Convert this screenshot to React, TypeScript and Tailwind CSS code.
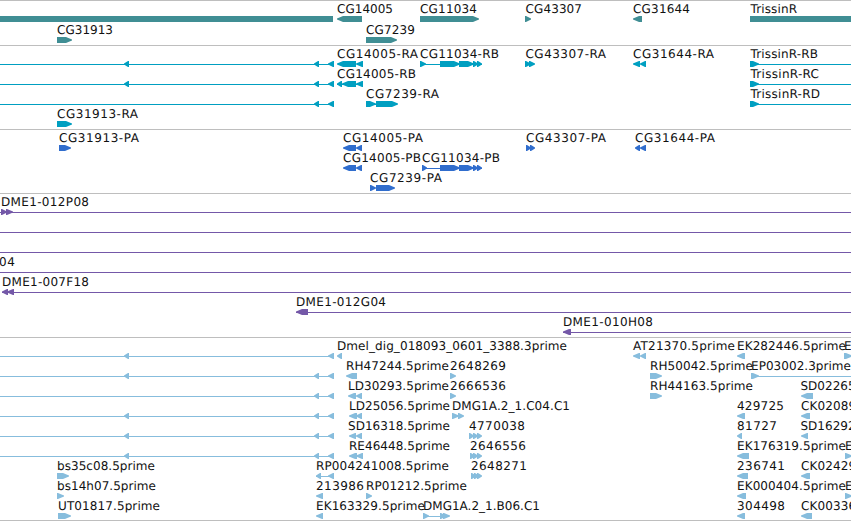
type Label = [x: number, text: string, end: number];
// a negative direction points left, zero is a plain bar
type Glyph = [from: number, to: number, dir: -1 | 0 | 1];
type Span = [from: number, to: number];

interface Row {
  labels?: Label[];
  lines?: Span[];
  glyphs?: Glyph[];
}

interface TrackData {
  name: string;
  color: string;
  height: string;
  pitch: number;
  rows: Row[];
}

const W = 851;

const tracks: TrackData[] = [
  {
    name: 'genes',
    color: 'fill-[#408e94]',
    height: 'h-[45px]',
    pitch: 21,
    rows: [
      {
        labels: [
          [337, 'CG14005', 393],
          [420, 'CG11034', 477],
          [525.5, 'CG43307', 582],
          [633, 'CG31644', 690],
          [750.5, 'TrissinR', 797],
        ],
        glyphs: [
          [0, 333, 0],
          [337, 362, -1],
          [420, 479, 1],
          [525, 531, 1],
          [633, 642, -1],
          [750, W, 0],
        ],
      },
      {
        labels: [
          [57, 'CG31913', 113],
          [366, 'CG7239', 415],
        ],
        glyphs: [
          [57, 72, 1],
          [366, 397, 1],
        ],
      },
    ],
  },
  {
    name: 'transcripts',
    color: 'fill-[#009fc1]',
    height: 'h-[84px]',
    pitch: 20,
    rows: [
      {
        labels: [
          [337, 'CG14005-RA', 418],
          [420, 'CG11034-RB', 499],
          [525.5, 'CG43307-RA', 606],
          [633, 'CG31644-RA', 714],
          [750.5, 'TrissinR-RB', 818],
        ],
        lines: [[0, 333], [420, 482], [750, W]],
        glyphs: [
          [124, 129, -1], [314, 319, -1], [328, 334, -1],
          [337, 356, -1], [356, 363, -1],
          [420, 426, 1], [440, 460, 1], [459, 474, 1], [473, 478, 1], [477, 482, 1],
          [525, 531, 1], [529, 535, 1],
          [633, 640, -1], [640, 646, -1],
          [750, 759, 1],
        ],
      },
      {
        labels: [
          [337, 'CG14005-RB', 416],
          [750.5, 'TrissinR-RC', 819],
        ],
        lines: [[0, 333], [337, 362], [750, W]],
        glyphs: [
          [124, 129, -1], [314, 319, -1], [328, 334, -1],
          [337, 342, -1], [342, 356, -1], [356, 363, -1],
          [750, 759, 1],
        ],
      },
      {
        labels: [
          [366, 'CG7239-RA', 439],
          [750.5, 'TrissinR-RD', 820],
        ],
        lines: [[0, 333], [366, 397], [750, W]],
        glyphs: [
          [314, 319, -1], [328, 334, -1],
          [366, 376, 1], [376, 398, 1],
          [750, 759, 1],
        ],
      },
      { labels: [[57, 'CG31913-RA', 138]], glyphs: [[57, 72, 1]] },
    ],
  },
  {
    name: 'proteins',
    color: 'fill-[#306dcd]',
    height: 'h-[64px]',
    pitch: 20,
    rows: [
      {
        labels: [
          [59, 'CG31913-PA', 139],
          [343, 'CG14005-PA', 423],
          [526, 'CG43307-PA', 606],
          [635, 'CG31644-PA', 715],
        ],
        glyphs: [
          [59, 71, 1],
          [343, 356, -1], [356, 362, -1],
          [526, 531, 1], [530, 535, 1],
          [635, 640, -1], [640, 646, -1],
        ],
      },
      {
        labels: [
          [343, 'CG14005-PB', 421],
          [422, 'CG11034-PB', 500],
        ],
        lines: [[422, 482]],
        glyphs: [
          [343, 356, -1], [356, 362, -1],
          [422, 427, 1], [440, 460, 1], [459, 474, 1], [473, 478, 1], [477, 482, 1],
        ],
      },
      {
        labels: [[370, 'CG7239-PA', 442]],
        glyphs: [[370, 376, 1], [376, 395, 1]],
      },
    ],
  },
  {
    name: 'clones',
    color: 'fill-[#7458a8]',
    height: 'h-[144px]',
    pitch: 20,
    rows: [
      {
        labels: [[1, 'DME1-012P08', 89]],
        lines: [[0, W]],
        glyphs: [[1, 7, 1], [6, 13, 1]],
      },
      { lines: [[0, W]] },
      { lines: [[0, W]] },
      { labels: [[-1, '04', 15]], lines: [[0, W]] },
      {
        labels: [[2, 'DME1-007F18', 89]],
        lines: [[2, W]],
        glyphs: [[2, 8, -1], [7, 14, -1]],
      },
      {
        labels: [[296, 'DME1-012G04', 386]],
        lines: [[296, W]],
        glyphs: [[296, 308, -1]],
      },
      {
        labels: [[563, 'DME1-010H08', 653]],
        lines: [[563, W]],
        glyphs: [[563, 571, -1]],
      },
    ],
  },
  {
    name: 'ests',
    color: 'fill-[#87bddd]',
    height: 'h-[183px]',
    pitch: 20,
    rows: [
      {
        labels: [
          [337, 'Dmel_dig_018093_0601_3388.3prime', 567],
          [633, 'AT21370.5prime', 735],
          [737, 'EK282446.5prime', 846],
          [844, 'E', 852],
        ],
        lines: [[0, 333]],
        glyphs: [
          [124, 129, -1], [328, 334, -1], [337, 342, -1],
          [633, 640, -1], [640, 646, -1], [737, 745, -1], [844, 852, 1],
        ],
      },
      {
        labels: [
          [346, 'RH47244.5prime', 449],
          [450, '2648269', 506],
          [650, 'RH50042.5prime', 753],
          [751, 'EP03002.3prime', 851],
        ],
        lines: [[0, 333], [751, W]],
        glyphs: [
          [124, 129, -1], [314, 319, -1], [328, 334, -1],
          [346, 357, -1], [450, 456, 1], [650, 662, 1], [751, 759, 1],
        ],
      },
      {
        labels: [
          [348, 'LD30293.5prime', 449],
          [450, '2666536', 506],
          [650, 'RH44163.5prime', 753],
          [800.5, 'SD02265.5prime', 902],
        ],
        lines: [[0, 333]],
        glyphs: [
          [314, 319, -1], [328, 334, -1], [348, 356, -1], [356, 362, -1],
          [450, 456, 1], [650, 662, 1], [801, 813, -1],
        ],
      },
      {
        labels: [
          [349, 'LD25056.5prime', 450],
          [452, 'DMG1A.2_1.C04.C1', 570],
          [737, '429725', 784],
          [801, 'CK020895.5prime', 911],
        ],
        lines: [[0, 333], [452, 462]],
        glyphs: [
          [124, 129, -1], [314, 319, -1], [328, 334, -1],
          [349, 357, -1], [356, 362, -1],
          [452, 459, 1], [458, 464, 1], [737, 745, -1], [801, 810, -1],
        ],
      },
      {
        labels: [
          [348, 'SD16318.5prime', 450],
          [469, '4770038', 525],
          [737, '81727', 777],
          [800.5, 'SD16292.5prime', 902],
        ],
        lines: [[0, 333]],
        glyphs: [
          [124, 129, -1], [314, 319, -1], [328, 334, -1],
          [349, 356, -1], [356, 362, -1],
          [469, 474, 1], [473, 478, 1], [477, 482, 1],
          [737, 742, -1], [801, 808, -1],
        ],
      },
      {
        labels: [
          [349, 'RE46448.5prime', 450],
          [470, '2646556', 526],
          [737, 'EK176319.5prime', 846],
          [845, 'E', 853],
        ],
        lines: [[0, 333]],
        glyphs: [
          [124, 129, -1], [314, 319, -1], [328, 334, -1],
          [349, 357, -1], [356, 363, -1],
          [470, 475, 1], [473, 478, 1], [477, 482, 1],
          [737, 749, -1], [845, 852, 1],
        ],
      },
      {
        labels: [
          [57, 'bs35c08.5prime', 155],
          [316, 'RP004241008.5prime', 449],
          [471, '2648271', 527],
          [737, '236741', 785],
          [801, 'CK024292.5prime', 911],
        ],
        lines: [[316, 333]],
        glyphs: [
          [57, 69, 1], [316, 321, -1], [328, 334, -1],
          [471, 476, 1], [474, 479, 1], [477, 482, 1],
          [737, 748, -1], [801, 810, -1],
        ],
      },
      {
        labels: [
          [57, 'bs14h07.5prime', 156],
          [316, '213986', 364],
          [366, 'RP01212.5prime', 467],
          [737, 'EK000404.5prime', 846],
          [845, 'E', 853],
        ],
        glyphs: [
          [57, 64, 1], [316, 323, -1], [366, 372, 1],
          [737, 746, -1], [845, 852, 1],
        ],
      },
      {
        labels: [
          [58, 'UT01817.5prime', 160],
          [316, 'EK163329.5prime', 425],
          [423, 'DMG1A.2_1.B06.C1', 540],
          [737, '304498', 785],
          [801, 'CK003365.5prime', 911],
        ],
        lines: [[423, 448]],
        glyphs: [
          [58, 71, 1], [316, 323, -1],
          [423, 429, 1], [440, 446, 1], [443, 450, 1],
          [737, 745, -1], [801, 812, -1],
        ],
      },
    ],
  },
];

function arrow([from, to, dir]: Glyph) {
  if (dir === 0) return `M${from} 16H${to}V22H${from}Z`;
  const head = Math.min(7, to - from) - 1;
  const [back, tip] = dir > 0 ? [from, to] : [to, from];
  const neck = tip - dir * head;
  return `M${back} 16H${neck}L${tip} 18.4V19.6L${neck} 22H${back}Z`;
}

function Track({ track }: { track: TrackData }) {
  return (
    <section className={`w-full border-t border-[#bebebe] ${track.height}`}>
      <svg className="-mt-px block h-full w-full overflow-hidden" aria-label={track.name}>
        {track.rows.map((row, i) => (
          <g key={i} transform={`translate(0 ${i * track.pitch})`}>
            <g className={track.color}>
              {row.lines?.map(([from, to]) => (
                <rect key={from} x={from} y={19} width={to - from} height={1} />
              ))}
              {row.glyphs?.map((g) => (
                <path key={g[0]} d={arrow(g)} />
              ))}
            </g>
            {row.labels?.map(([x, text, end]) => (
              <text
                key={text + x}
                x={x}
                y={13}
                textLength={end - x}
                textRendering="geometricPrecision"
                className="fill-[#111111] font-['DejaVu_Sans',sans-serif] text-[12px]"
              >
                {text}
              </text>
            ))}
          </g>
        ))}
      </svg>
    </section>
  );
}

export default function App() {
  return (
    <main className="flex h-[521px] w-[851px] flex-col overflow-hidden border-b border-[#bebebe] bg-white">
      {tracks.map((track) => (
        <Track key={track.name} track={track} />
      ))}
    </main>
  );
}
